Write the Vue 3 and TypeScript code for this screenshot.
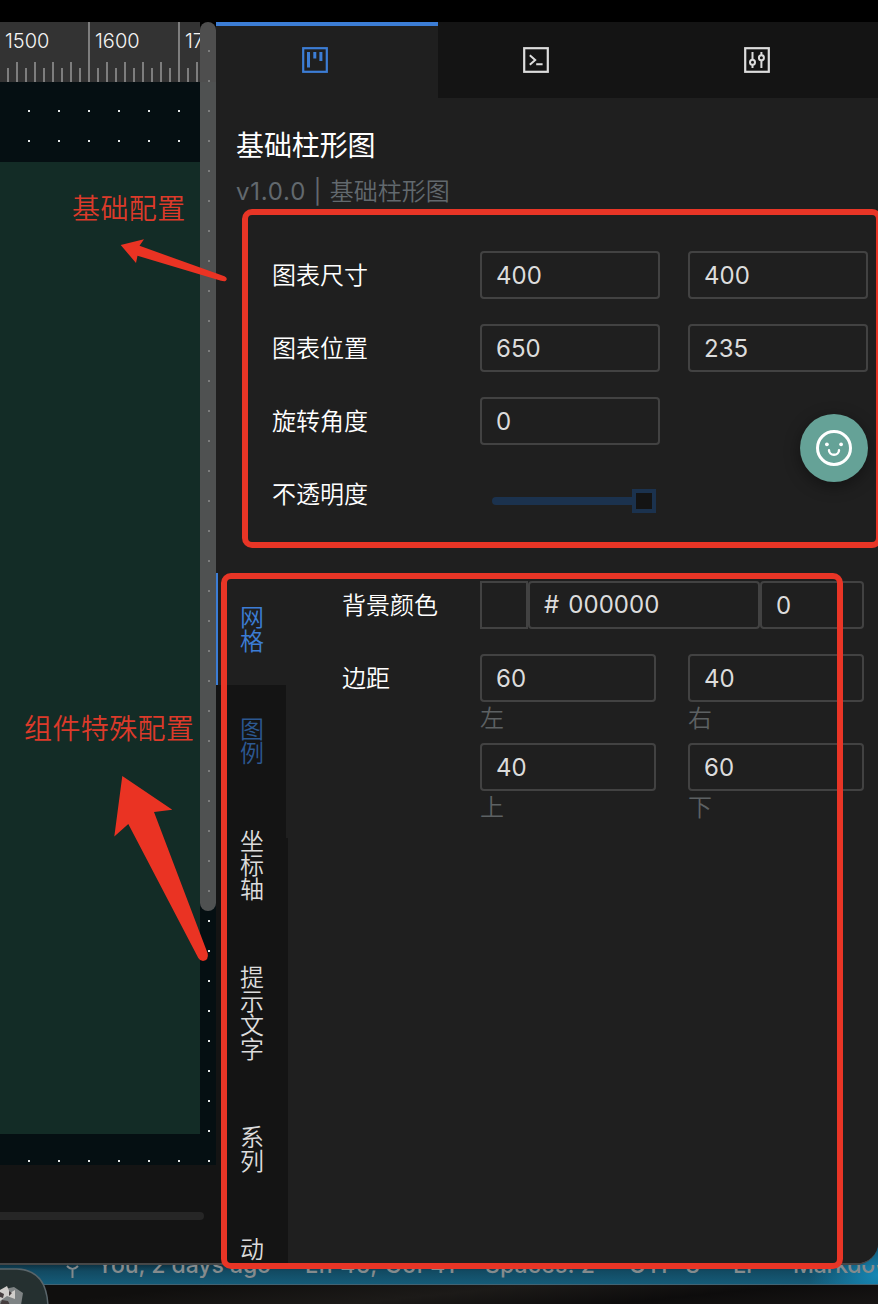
<script setup lang="ts">
interface Tick { x: number; y: number }
interface SideTab { label: string; state: string }
interface Row { label: string; values: number[] }

const ticks: Tick[] = Array.from({ length: 23 }, (_, k) => ({
  x: 9 * k - 2,
  y: k % 10 === 0 ? 0 : k % 2 === 0 ? 40 : 46,
}))
const marks = [
  { x: 5, text: '1500' },
  { x: 95, text: '1600' },
  { x: 185, text: '1700' },
]
const rows: Row[] = [
  { label: '图表尺寸', values: [400, 400] },
  { label: '图表位置', values: [650, 235] },
  { label: '旋转角度', values: [0] },
]
const sideTabs: SideTab[] = [
  { label: '网格', state: 'active' },
  { label: '图例', state: 'hover' },
  { label: '坐标轴', state: 'wide step' },
  { label: '提示文字', state: 'wide' },
  { label: '系列', state: 'wide' },
  { label: '动', state: 'wide' },
]
const margins = [
  { value: 60, name: '左' },
  { value: 40, name: '右' },
  { value: 40, name: '上' },
  { value: 60, name: '下' },
]
</script>

<template>
  <div class="screen">
    <div class="top-strip"></div>
    <div class="app">
      <section class="editor">
        <svg class="ruler" width="200" height="60" viewBox="0 0 200 60">
          <rect width="200" height="60" fill="#333" />
          <rect v-for="t in ticks" :key="t.x" :x="t.x" :y="t.y" width="2" :height="60 - t.y" fill="#7e7e7e" />
          <text v-for="m in marks" :key="m.x" :x="m.x" y="26" class="mark">{{ m.text }}</text>
        </svg>
        <div class="stage">
          <div class="page"></div>
          <svg class="dots" width="216" height="1143">
            <defs>
              <pattern id="grid" width="30" height="30" patternUnits="userSpaceOnUse">
                <rect x="28" y="28" width="2" height="2" fill="#e6e8e8" />
              </pattern>
            </defs>
            <rect y="60" width="200" height="80" fill="url(#grid)" />
            <rect y="1112" width="200" height="31" fill="url(#grid)" />
            <rect x="200" width="16" height="1143" fill="url(#grid)" />
          </svg>
          <div class="vbar"></div>
        </div>
        <div class="editor-foot"><div class="hbar"></div></div>
      </section>

      <aside class="panel">
        <nav class="tabs">
          <div class="tab active">
            <svg width="28" height="28" viewBox="0 0 28 28">
              <rect x="2.2" y="2.2" width="23.6" height="23.6" fill="none" stroke="currentColor" stroke-width="2.2" />
              <path d="M6 6h3v15.500H6zM12.300 6h3v6.500h-3zM18.400 6h3v9h-3z" fill="currentColor" />
            </svg>
          </div>
          <div class="tab">
            <svg width="28" height="28" viewBox="0 0 28 28">
              <rect x="2.2" y="2.2" width="23.6" height="23.6" fill="none" stroke="currentColor" stroke-width="2.2" />
              <path d="M7.800 9.200l5.400 4.800-5.400 4.800M14.200 18.200h6.400" fill="none" stroke="currentColor" stroke-width="2" />
            </svg>
          </div>
          <div class="tab">
            <svg width="28" height="28" viewBox="0 0 28 28">
              <rect x="2.2" y="2.2" width="23.6" height="23.6" fill="none" stroke="currentColor" stroke-width="2.2" />
              <g fill="none" stroke="currentColor" stroke-width="2">
                <path d="M9.500 6v7.600M9.500 19v3M18.400 6v3.200M18.400 14.600V22" />
                <circle cx="9.5" cy="16.2" r="2.5" />
                <circle cx="18.4" cy="11.8" r="2.5" />
              </g>
            </svg>
          </div>
        </nav>

        <header class="head">
          <h1>基础柱形图</h1>
          <p><span class="version">v1.0.0 | </span>基础柱形图</p>
        </header>

        <div class="base">
          <div v-for="r in rows" :key="r.label" class="row">
            <span class="label">{{ r.label }}</span>
            <div v-for="(v, i) in r.values" :key="i" class="field">{{ v }}</div>
          </div>
          <div class="row">
            <span class="label">不透明度</span>
            <div class="slider"><div class="rail"></div><div class="handle"></div></div>
          </div>
        </div>

        <div class="special">
          <div class="side">
            <div v-for="t in sideTabs" :key="t.label" class="side-tab" :class="t.state">{{ t.label }}</div>
          </div>
          <div class="form">
            <div class="form-row">
              <span class="label">背景颜色</span>
              <div class="color">
                <div class="swatch"></div>
                <div class="field hex"># 000000</div>
                <div class="field alpha">0</div>
              </div>
            </div>
            <div class="form-row">
              <span class="label">边距</span>
              <div class="margins">
                <div v-for="m in margins" :key="m.name" class="margin">
                  <div class="field">{{ m.value }}</div>
                  <span class="caption">{{ m.name }}</span>
                </div>
              </div>
            </div>
          </div>
        </div>
      </aside>
    </div>

    <footer class="desktop">
      <div class="status">
        <svg width="878" height="19" viewBox="0 0 878 19">
          <g class="status-text">
            <text x="97" y="8" textLength="174">You, 2 days ago</text>
            <text x="305" y="8" textLength="150">Ln 45, Col 41</text>
            <text x="485" y="8" textLength="110">Spaces: 2</text>
            <text x="629" y="8" textLength="71">UTF-8</text>
            <text x="733" y="8">LF</text>
            <text x="793" y="8" textLength="114">Markdown</text>
          </g>
          <path d="M67 1q5.500 6 11 0M72.500 4v9" fill="none" stroke="#83898b" stroke-width="2" />
        </svg>
      </div>
      <div class="wallpaper"></div>
      <svg class="dock" width="52" height="38" viewBox="0 0 52 38">
        <path d="M-2 2H17Q47 3 48 40H-2z" fill="#253030" stroke="#59656a" stroke-width="1.5" />
        <path d="M0 23L14 20 23 26 21 38H0z" fill="#7e8384" />
        <path d="M0 23L7 19 10 26 15 23 15 32 7 29 0 34z" fill="#d0cecb" />
        <path d="M0 25l4 2-1 4-3-1zM9 24l3 2-3 3zM2 33l6 1 2 4H0z" fill="#453d3e" />
      </svg>
    </footer>

    <div class="smile">
      <svg width="40" height="40" viewBox="0 0 40 40" fill="none" stroke="#fff">
        <circle cx="20" cy="20" r="16.500" stroke-width="3" />
        <path d="M15 22.200a5 4.600 0 0 0 10 0" stroke-width="2.400" stroke-linecap="round" />
        <circle cx="12.900" cy="16.300" r="1.900" fill="#fff" stroke="none" />
        <circle cx="27.100" cy="16.300" r="1.900" fill="#fff" stroke="none" />
      </svg>
    </div>

    <div class="frame frame-base"></div>
    <div class="frame frame-special"></div>
    <span class="note note-base">基础配置</span>
    <span class="note note-special">组件特殊配置</span>
    <svg class="arrows" width="878" height="1304" viewBox="0 0 878 1304" fill="#ea3323">
      <path d="M120.700 245L144 239.300 139.500 245.800 224.500 276.300Q228.500 278.500 225.500 281Q224 281.500 221 280.700L137.500 255.700 136 263z" />
      <path d="M122.300 776L172.300 809.700 154 812 207.700 953.500Q209 960 203 961Q200 961 198.300 958L128.300 824 114.300 836.500z" />
    </svg>
  </div>
</template>

<style>
body { margin: 0; background: #000; }
</style>

<style scoped>
* { box-sizing: border-box; }
.screen {
  position: relative;
  display: flex;
  flex-direction: column;
  width: 878px;
  height: 1304px;
  overflow: hidden;
  background: #000;
  color: #fff;
  font-family: Inter, "Noto Sans CJK SC", sans-serif;
  font-size: 24px;
  font-weight: 350;
}
.top-strip { height: 22px; flex: none; }
.app {
  display: flex;
  height: 1243px;
  flex: none;
  background: #141414;
  border-bottom: 2px solid #454748;
  border-bottom-right-radius: 22px;
  overflow: hidden;
  z-index: 1;
}
.editor { position: relative; width: 216px; flex: none; display: flex; flex-direction: column; }
.ruler { position: absolute; z-index: 1; top: 0; left: 0; }
.mark { font: 350 20px Inter, sans-serif; fill: #f5f5f5; }
.stage { position: relative; height: 1143px; padding-top: 140px; background: linear-gradient(#000 0 60px, #050f12 60px); flex: none; }
.page { width: 200px; height: 972px; background: #132c26; }
.dots { position: absolute; left: 0; top: 0; }
.vbar {
  position: absolute;
  top: 0;
  left: 200px;
  width: 16px;
  height: 889px;
  border-radius: 8px;
  background: rgba(98, 98, 97, 0.8);
}
.editor-foot { padding-top: 47px; }
.hbar { width: 204px; height: 8px; border-radius: 0 4px 4px 0; background: #262626; }

.panel { flex: 1; min-width: 0; background: #1f1f1f; display: flex; flex-direction: column; }
.tabs { display: grid; grid-template-columns: 221px 221px 220px; height: 76px; flex: none; }
.tab { display: flex; justify-content: center; align-items: center; padding-right: 23px; background: #141414; color: #dcdcdc; }
.tab.active { position: relative; width: 222px; padding: 0 24px 4px 0; background: #1f1f1f; color: #3c7dd5; border-top: 4px solid #3c7dd5; }
.head { padding: 26px 0 0 20px; height: 127px; flex: none; }
h1 { margin: 0; font-size: 28px; font-weight: 400; line-height: 44px; letter-spacing: -0.1px; }
p { margin: 4px 0 0; line-height: 40px; color: #62696e; }
.version { letter-spacing: 0.75px; font-weight: 400; }

.base { display: flex; flex-direction: column; gap: 25px; padding: 26px 0 0 56px; height: 348px; flex: none; }
.row { display: flex; height: 48px; align-items: center; gap: 28px; }
.row .label { width: 180px; }
.label { line-height: 48px; padding-top: 1px; flex: none; }
.field {
  width: 180px;
  height: 48px;
  flex: none;
  border: 2px solid #424242;
  border-radius: 4px;
  padding-left: 14px;
  line-height: 45px;
  color: #dcdcdc;
  font-weight: 400;
}
.slider { display: flex; align-items: center; padding: 13px 0 0 12px; }
.rail { width: 140px; height: 8px; border-radius: 4px 0 0 4px; background: #1b324e; }
.handle { width: 24px; height: 24px; border: 4px solid #1b324e; background: #141414; }

.special { display: flex; flex: 1; min-height: 0; }
.side { width: 72px; flex: none; }
.side-tab {
  width: 70px;
  padding: 33px 22px 31px 24px;
  line-height: 24px;
  background: #141414;
  color: #dcdcdc;
  word-break: break-all;
}
.side-tab.active { background: #1f1f1f; color: #3c7dd5; box-shadow: inset 2px 0 #3c7dd5; }
.side-tab.hover { color: #2c5892; }
.side-tab.wide { width: 72px; padding-right: 24px; }
.side-tab.step { background: linear-gradient(#1f1f1f, #1f1f1f) 70px 0 / 2px 41px no-repeat #141414; }
.form { padding: 8px 0 0 54px; display: flex; flex-direction: column; gap: 25px; }
.form-row { display: flex; height: 48px; }
.form-row .label { width: 138px; }
.color { display: flex; }
.swatch { width: 48px; height: 48px; border: 2px solid #424242; }
.hex { width: 232px; line-height: 44px; letter-spacing: 0.1px; word-spacing: 2px; }
.alpha { width: 104px; }
.margins { display: grid; grid-template-columns: 176px 176px; column-gap: 32px; grid-auto-rows: 89px; }
.margin .field { width: 176px; }
.caption { display: block; color: #5d6163; line-height: 32px; padding-top: 1px; }

.desktop { position: relative; flex: none; height: 39px; }
.status {
  box-sizing: content-box;
  height: 19px;
  margin-top: -20px;
  padding-top: 20px;
  background: radial-gradient(ellipse 70px 50px at 878px 30px, #1687b5, transparent), linear-gradient(#0c3344 20px, #124a62 26px, #155b78);
  border-bottom: 1px solid #426373;
}
.status svg { display: block; }
.status-text { font: 500 23px Inter, sans-serif; fill: #858b8d; }
.wallpaper { height: 19px; background: linear-gradient(174deg, #100f0e 20%, #1c1a18 50%, #0d0c0c 75%, #171514); }
.dock { position: absolute; left: 0; top: 2px; }

.smile {
  position: absolute;
  left: 800px;
  top: 414px;
  width: 68px;
  height: 68px;
  border-radius: 50%;
  display: flex;
  align-items: center;
  justify-content: center;
  background: #65a297;
  box-shadow: 0 4px 16px rgba(0, 0, 0, 0.4);
  z-index: 2;
}
.frame { position: absolute; border: 6px solid #e83526; border-radius: 10px; z-index: 3; }
.frame-base { left: 242px; top: 209px; width: 640px; height: 339px; }
.frame-special { left: 221px; top: 573px; width: 622px; height: 696px; }
.note { position: absolute; z-index: 3; color: #dc3a2a; font-size: 28px; line-height: 40px; white-space: nowrap; letter-spacing: 0.4px; }
.note-base { left: 72px; top: 189px; }
.note-special { left: 24px; top: 709px; }
.arrows { position: absolute; left: 0; top: 0; z-index: 3; }
</style>
